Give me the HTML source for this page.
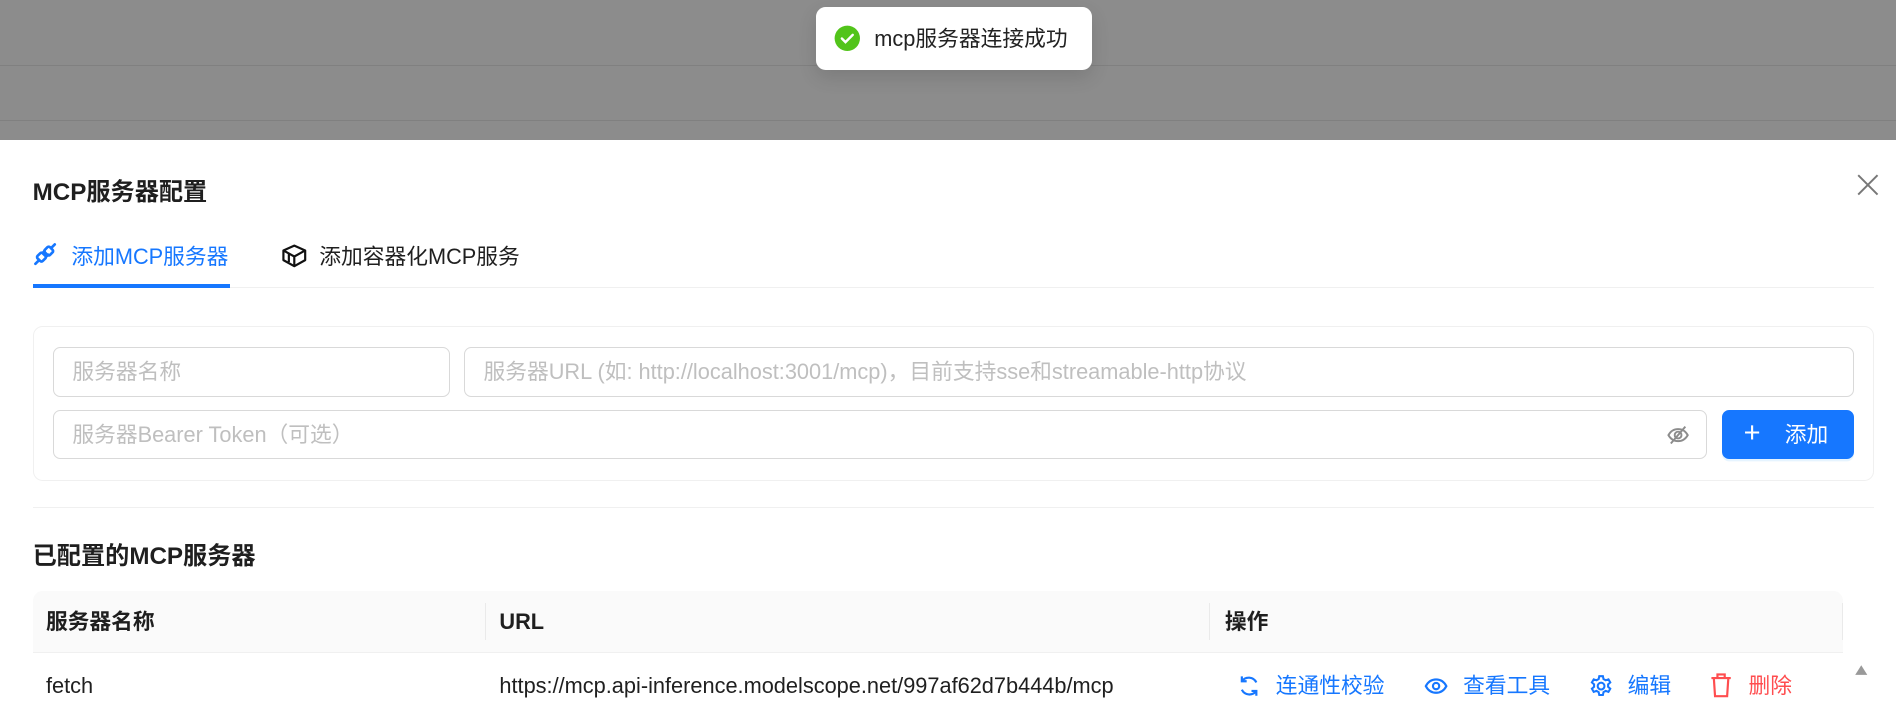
<!DOCTYPE html>
<html><head><meta charset="utf-8"><style>
*{box-sizing:border-box;margin:0;padding:0}
html,body{width:1896px;height:712px;overflow:hidden;background:#fff}
#w{zoom:1.2092;width:1568px;height:589px;position:relative;overflow:hidden;font-family:"Liberation Sans","Noto Sans CJK SC",sans-serif;color:#1f1f1f;font-size:18px;line-height:24px}
.a{position:absolute;white-space:nowrap}
.ov{left:0;top:0;width:1568px;height:116px;background:#8c8c8c}
.ln{left:0;width:1568px;height:1px;background:#808080}
.toast{left:675px;top:6px;width:228px;height:52px;background:#fff;border-radius:8px;box-shadow:0 6px 16px rgba(0,0,0,.12)}
.modal{left:0;top:116px;width:1568px;height:480px;background:#fff;border-radius:2px 0 0 0}
.inp{border:1px solid #d9d9d9;border-radius:6px;background:#fff;color:#bfbfbf;padding-left:15px;line-height:39px;height:41px;font-size:18px}
.blue{color:#1677ff}
.th{font-weight:bold;font-size:18px;top:502px;line-height:24px;height:24px}
.sep{width:1px;height:30px;background:#eaeaea;top:499px}
</style></head><body><div id="w">
<div class="a ov"></div>
<div class="a ln" style="top:54px"></div>
<div class="a ln" style="top:99px"></div>
<div class="a toast">
 <svg class="a" style="left:15px;top:15px" width="22" height="22" viewBox="0 0 22 22"><circle cx="11" cy="11" r="10.5" fill="#52c41a"/><path d="M6.5 11.2l3 3 6-6" stroke="#fff" stroke-width="2" fill="none" stroke-linecap="round"/></svg>
 <div class="a" style="left:48px;top:14px;font-size:18px;color:#222">mcp服务器连接成功</div>
</div>
<div class="a modal"></div>
<svg class="a" style="left:1536px;top:144px" width="18" height="18" viewBox="0 0 18 18"><path d="M1 1L17 17M17 1L1 17" stroke="#777" stroke-width="1.6"/></svg>
<div class="a" style="left:27px;top:147px;font-size:20px;font-weight:bold">MCP服务器配置</div>
<svg class="a" style="left:27px;top:200px" width="20" height="20" viewBox="0 0 20 20" fill="none" stroke="#1677ff" stroke-width="2.2" stroke-linecap="round"><path d="M2 18l3-3M18 2l-3 3"/><rect x="4" y="9.5" width="6" height="6" rx="1.5" transform="rotate(-45 7 12.5)"/><rect x="10" y="4.5" width="6" height="6" rx="1.5" transform="rotate(-45 13 7.5)"/><path d="M8 9l1.5-1.5M11 12l1.5-1.5"/></svg>
<div class="a blue" style="left:59px;top:200px;font-size:18px">添加MCP服务器</div>
<svg class="a" style="left:232px;top:200px" width="22" height="22" viewBox="0 0 22 22" fill="none" stroke="#111" stroke-width="1.8" stroke-linejoin="round"><path d="M2 7l9-4 9 4v8l-9 5-9-5z"/><path d="M2 7l9 5 9-5M11 12v8M6.5 9.5v7"/></svg>
<div class="a" style="left:264px;top:200px;font-size:18px">添加容器化MCP服务</div>
<div class="a" style="left:27px;top:237px;width:1523px;height:1px;background:#f0f0f0"></div>
<div class="a" style="left:27px;top:235px;width:163px;height:3px;background:#1677ff"></div>
<div class="a" style="left:27px;top:270px;width:1523px;height:128px;border:1px solid #f0f0f0;border-radius:8px"></div>
<div class="a inp" style="left:44px;top:287px;width:328px">服务器名称</div>
<div class="a inp" style="left:384px;top:287px;width:1149px">服务器URL (如: http://localhost:3001/mcp)，目前支持sse和streamable-http协议</div>
<div class="a inp" style="left:44px;top:339px;width:1368px">服务器Bearer Token（可选）</div>
<svg class="a" style="left:1378px;top:350px" width="20" height="20" viewBox="0 0 20 20" fill="none" stroke="#8c8c8c" stroke-width="1.6"><path d="M2 10c2-3.5 5-5 8-5s6 1.5 8 5c-2 3.5-5 5-8 5s-6-1.5-8-5z"/><circle cx="10" cy="10" r="2.8"/><path d="M4 17L16 3"/></svg>
<div class="a" style="left:1424px;top:339px;width:109px;height:41px;background:#1677ff;border-radius:6px;color:#fff;font-size:18px;line-height:41px;box-shadow:0 2px 0 rgba(5,145,255,.1)"><span style="position:absolute;left:18px;top:-1px;font-size:24px">+</span><span style="position:absolute;left:52px">添加</span></div>
<div class="a" style="left:27px;top:419px;width:1523px;height:1px;background:#f0f0f0"></div>
<div class="a" style="left:27px;top:448px;font-size:20px;font-weight:bold">已配置的MCP服务器</div>
<div class="a" style="left:27px;top:489px;width:1497px;height:51px;background:#fafafa;border-radius:8px 8px 0 0;border-bottom:1px solid #f0f0f0"></div>
<div class="a sep" style="left:401px"></div>
<div class="a sep" style="left:1000px"></div>
<div class="a sep" style="left:1523px"></div>
<div class="a th" style="left:38px">服务器名称</div>
<div class="a th" style="left:413px">URL</div>
<div class="a th" style="left:1013px">操作</div>
<div class="a" style="left:38px;top:555px">fetch</div>
<div class="a" style="left:413px;top:555px">https://mcp.api-inference.modelscope.net/997af62d7b444b/mcp</div>
<svg class="a" style="left:1023px;top:557px" width="20" height="20" viewBox="0 0 20 20" fill="none" stroke="#1677ff" stroke-width="1.8"><path d="M16 7a7 7 0 0 0-12-1M4 13a7 7 0 0 0 12 1"/><path d="M4 2v4h4M16 18v-4h-4"/></svg>
<div class="a blue" style="left:1055px;top:555px">连通性校验</div>
<svg class="a" style="left:1178px;top:557px" width="20" height="20" viewBox="0 0 20 20" fill="none" stroke="#1677ff" stroke-width="1.8"><path d="M1.5 10c2-3.8 5-5.5 8.5-5.5s6.5 1.7 8.5 5.5c-2 3.8-5 5.5-8.5 5.5S3.5 13.8 1.5 10z"/><circle cx="10" cy="10" r="2.6"/></svg>
<div class="a blue" style="left:1210px;top:555px">查看工具</div>
<svg class="a" style="left:1314px;top:557px" width="20" height="20" viewBox="0 0 20 20" fill="none" stroke="#1677ff" stroke-width="1.7"><path d="M8.5 1.8h3l.5 2.4 1.8 1 2.3-.8 1.5 2.6-1.8 1.6v2l1.8 1.6-1.5 2.6-2.3-.8-1.8 1-.5 2.4h-3l-.5-2.4-1.8-1-2.3.8-1.5-2.6 1.8-1.6v-2L2.4 7l1.5-2.6 2.3.8 1.8-1z"/><circle cx="10" cy="10" r="2.8"/></svg>
<div class="a blue" style="left:1346px;top:555px">编辑</div>
<svg class="a" style="left:1413px;top:556px" width="20" height="22" viewBox="0 0 20 22" fill="none" stroke="#ff4d4f" stroke-width="1.8"><path d="M2 5h16M7 5V2h6v3M4 5l1 15h10l1-15"/></svg>
<div class="a" style="left:1446px;top:555px;color:#ff4d4f">删除</div>
<svg class="a" style="left:1533px;top:549px" width="12" height="10" viewBox="0 0 12 10"><path d="M6 1L11 9H1z" fill="#999"/></svg>
</div></body></html>
